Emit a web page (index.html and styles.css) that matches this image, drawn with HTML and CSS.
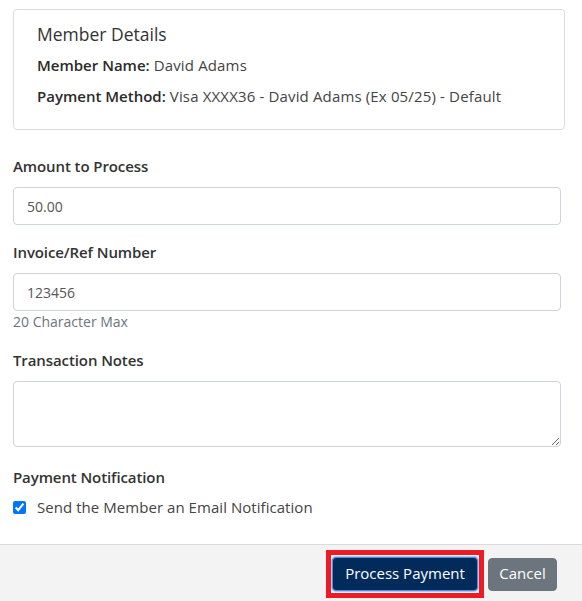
FILE: index.html
```html
<!DOCTYPE html>
<html lang="en">
<head>
<meta charset="utf-8">
<title>Process Payment</title>
<link rel="stylesheet" href="styles.css">
</head>
<body>
<div class="content">
  <div class="card">
    <div class="card-title">Member Details</div>
    <div class="detail"><span class="key">Member Name:</span> David Adams</div>
    <div class="detail"><span class="key">Payment Method:</span> Visa XXXX36 - David Adams (Ex 05/25) - Default</div>
  </div>

  <div class="group g-amount">
    <label class="label" for="amount">Amount to Process</label>
    <input class="input" id="amount" type="text" value="50.00">
  </div>

  <div class="group g-invoice">
    <label class="label" for="invoice">Invoice/Ref Number</label>
    <input class="input" id="invoice" type="text" value="123456">
    <div class="help">20 Character Max</div>
  </div>

  <div class="group g-notes">
    <label class="label" for="notes">Transaction Notes</label>
    <textarea class="textarea" id="notes"></textarea>
  </div>

  <div class="group g-notify">
    <div class="label">Payment Notification</div>
    <label class="check"><input type="checkbox" checked> <span>Send the Member an Email Notification</span></label>
  </div>
</div>
<div class="footer">
  <span class="highlight"><button class="btn btn-primary" type="button">Process Payment</button></span>
  <button class="btn btn-secondary" type="button">Cancel</button>
</div>
</body>
</html>
```

FILE: styles.css
```css
* { box-sizing: border-box; }
html, body { margin: 0; padding: 0; background: #fff; }
body {
  font-family: "Open Sans", "Liberation Sans", sans-serif;
  font-size: 15px;
  color: #212529;
}
.content {
  padding: 9px 21px 0 13px;
}
.card {
  width: 552px;
  height: 121px;
  border: 1px solid #dcdcdc;
  border-radius: 4px;
  padding: 11px 22px 0 23px;
}
.card-title {
  font-size: 17.5px;
  line-height: 26px;
  color: #333;
  margin-bottom: 8px;
}
.detail {
  font-size: 15px;
  letter-spacing: 0.15px;
  line-height: 20px;
  color: #444;
  margin-bottom: 11px;
}
.key {
  font-weight: 600;
  color: #2a2a2a;
  letter-spacing: 0;
}
.group { display: flex; flex-direction: column; }
.g-amount { margin-top: 25px; }
.g-invoice { margin-top: 16px; }
.g-notes { margin-top: 17px; }
.g-notify { margin-top: 19px; }
.label {
  font-size: 15px;
  font-weight: 600;
  letter-spacing: -0.1px;
  line-height: 22px;
  color: #333;
  margin-bottom: 10px;
}
.g-notify .label { margin-bottom: 8px; }
.input {
  width: 548px;
  height: 38px;
  border: 1px solid #ced4da;
  border-radius: 4px;
  padding: 0 13px;
  font-family: inherit;
  font-size: 14px;
  color: #555;
  background: #fff;
}
.help {
  margin-top: 1px;
  font-size: 14px;
  line-height: 20px;
  color: #6c757d;
}
.textarea {
  display: block;
  width: 548px;
  height: 66px;
  border: 1px solid #ced4da;
  border-radius: 4px;
  font-family: inherit;
  font-size: 14px;
}
.check {
  display: flex;
  align-items: center;
  gap: 11px;
  font-size: 15px;
  letter-spacing: 0.05px;
  line-height: 22px;
  color: #444;
}
.check input {
  width: 13px;
  height: 13px;
  margin: 0;
}
.footer {
  margin-top: 26px;
  border-top: 1px solid #dcdcdc;
  background: #f3f3f3;
  height: 60px;
  display: flex;
  justify-content: flex-end;
  align-items: flex-start;
  gap: 4px;
  padding: 5px 25px 0 0;
}
.highlight {
  display: inline-flex;
  border: 5px solid #ed1c24;
  padding: 2px 1px;
}
.btn {
  font-family: inherit;
  font-size: 15px;
  line-height: 20px;
  height: 34px;
  padding: 0 0 2px;
  border-radius: 4px;
  cursor: pointer;
  display: inline-flex;
  align-items: center;
  justify-content: center;
}
.btn-primary {
  width: 146px;
  background: #022b5c;
  color: #fff;
  border: 1px solid #4d8fe0;
  box-shadow: 0 0 0 1px #a8c8f0;
}
.btn-secondary {
  margin-top: 8px;
  width: 69px;
  height: 33px;
  padding-bottom: 3px;
  background: #6c757d;
  color: #fff;
  border: 1px solid #6c757d;
}
```
